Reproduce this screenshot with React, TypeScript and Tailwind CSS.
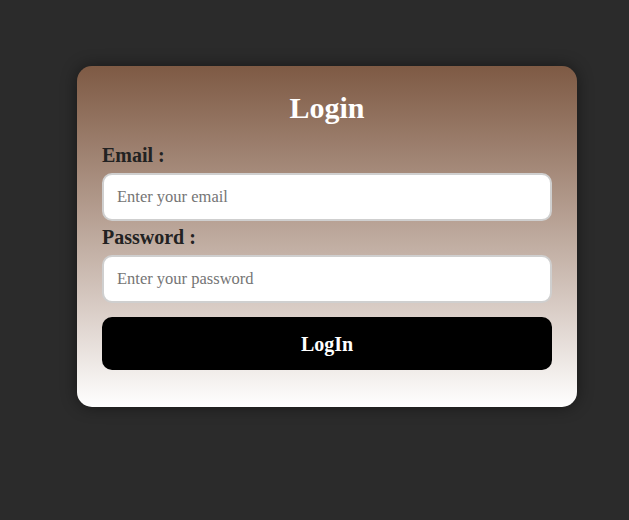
import React from 'react';

const App: React.FC = () => {
  return (
    <div className="min-h-[520px] w-full bg-[#2b2b2b] pl-[77px] pt-[66px] font-['Liberation_Serif',serif]">
      <div className="w-[500px] rounded-[15px] bg-gradient-to-b from-[#7e5a44] to-white px-[25px] pt-[25px] pb-[37px] shadow-[0_0_16px_rgba(0,0,0,0.45)]">
        <h2 className="mb-[19px] text-center text-[30px] font-bold leading-[34px] text-white">Login</h2>
        <form className="flex flex-col" onSubmit={(e) => e.preventDefault()}>
          <label className="mb-[6px] text-[20px] font-bold leading-[23px] text-[#222]">Email :</label>
          <input
            type="email"
            placeholder="Enter your email"
            className="mb-[5px] h-[48px] w-full rounded-[10px] border-2 border-[#cfcfcf] bg-white pl-[13px] text-[16.5px] text-[#222] placeholder:text-[#757575] outline-none"
          />
          <label className="mb-[6px] text-[20px] font-bold leading-[23px] text-[#222]">Password :</label>
          <input
            type="password"
            placeholder="Enter your password"
            className="h-[48px] w-full rounded-[10px] border-2 border-[#cfcfcf] bg-white pl-[13px] text-[16.5px] text-[#222] placeholder:text-[#757575] outline-none"
          />
          <button
            type="submit"
            className="mt-[14px] h-[53px] w-full rounded-[10px] bg-black text-[20px] font-bold text-white"
          >
            LogIn
          </button>
        </form>
      </div>
    </div>
  );
};

export default App;
